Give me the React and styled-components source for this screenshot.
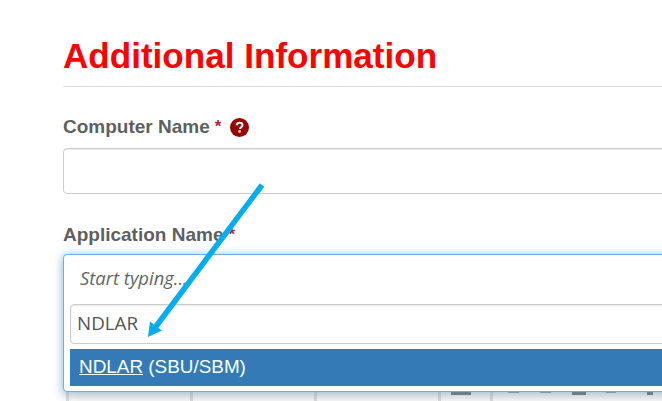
import React from 'react';
import styled, { createGlobalStyle } from 'styled-components';

const Global = createGlobalStyle`
  html, body {
    margin: 0;
    padding: 0;
    background: #fff;
    overflow: hidden;
  }
`;

const Page = styled.div`
  position: relative;
  width: 662px;
  height: 401px;
  overflow: hidden;
  box-sizing: border-box;
  padding: 36px 0 0 63px;
  font-family: "Liberation Sans", Arial, sans-serif;
`;

const Title = styled.h1`
  margin: 0;
  width: 700px;
  height: 51px;
  box-sizing: border-box;
  border-bottom: 1px solid #ddd;
  color: #ff0000;
  font-size: 35.1px;
  line-height: 40px;
  font-weight: 700;
`;

const Label = styled.label`
  display: flex;
  align-items: center;
  height: 20px;
  color: #5f5f5f;
  font-size: 19px;
  font-weight: 700;
  margin-top: ${(p) => p.$top}px;
`;

const Star = styled.span`
  color: #b0293a;
  margin-left: 5px;
  font-size: 17px;
`;

const Help = styled.svg`
  width: 19px;
  height: 19px;
  margin-left: 9px;
`;

const TextBox = styled.div`
  width: 700px;
  height: 46px;
  margin-top: 11px;
  box-sizing: border-box;
  border: 1px solid #ccc;
  border-radius: 4px;
  box-shadow: inset 0 1px 1px rgba(0, 0, 0, 0.075);
`;

const SelectBox = styled.div`
  position: relative;
  z-index: 1;
  width: 700px;
  height: 138px;
  margin-top: 9px;
  box-sizing: border-box;
  padding: 0 6px;
  background: #fff;
  border: 1px solid #66afe9;
  border-radius: 4px;
  box-shadow: 0 0 8px rgba(102, 175, 233, 0.6), 0 6px 12px rgba(0, 0, 0, 0.175);
`;

const Placeholder = styled.div`
  height: 49px;
  padding-left: 10px;
  color: #666;
  font-family: "Open Sans", sans-serif;
  font-size: 18.4px;
  font-style: italic;
  line-height: 45px;
`;

const Search = styled.div`
  height: 40px;
  box-sizing: border-box;
  padding-left: 6px;
  border: 1px solid #ccc;
  border-radius: 4px;
  box-shadow: inset 0 1px 2px rgba(0, 0, 0, 0.1);
  color: #555;
  font-family: "Open Sans", sans-serif;
  font-size: 18.8px;
  line-height: 37px;
`;

const Option = styled.div`
  height: 37px;
  margin-top: 5px;
  padding-left: 9px;
  background: #337ab7;
  color: #fff;
  font-size: 18.9px;
  line-height: 36px;
`;

const Match = styled.span`
  text-decoration: underline;
`;

const Toolbar = styled.div`
  display: flex;
  align-items: flex-start;
  width: 700px;
  height: 9px;
`;

const ToolButton = styled.div`
  flex: none;
  width: ${(p) => p.$width}px;
  height: 9px;
  box-sizing: border-box;
  border-right: 3px solid #e2e2e2;
`;

const ToolIcon = styled.span`
  flex: none;
  width: ${(p) => p.$width}px;
  height: ${(p) => (p.$faint ? 1 : 3)}px;
  margin-left: ${(p) => p.$gap}px;
  background: ${(p) => (p.$faint ? '#aaa' : '#808080')};
`;

const Arrow = styled.svg`
  position: absolute;
  z-index: 2;
  left: 0;
  top: 0;
  pointer-events: none;
`;

export default function App() {
  return (
    <>
      <Global />
      <Page>
        <Title>Additional Information</Title>
        <Label $top={30}>
          Computer Name<Star>*</Star>
          <Help viewBox="0 0 19 19">
            <circle cx="9.5" cy="9.5" r="9.5" fill="#990000" />
            <path d="M6.6 7.3c.2-1.6 1.4-2.6 3-2.6s2.9 1 2.9 2.4c0 1.1-.6 1.7-1.4 2.2-.7.5-1 .8-1 1.6" fill="none" stroke="#fff" strokeWidth="2" />
            <rect x="8.4" y="12.2" width="2.3" height="2.3" fill="#fff" />
          </Help>
        </Label>
        <TextBox />
        <Label $top={31}>
          Application Name<Star>*</Star>
        </Label>
        <SelectBox>
          <Placeholder>Start typing...</Placeholder>
          <Search>NDLAR</Search>
          <Option>
            <Match>NDLAR</Match> (SBU/SBM)
          </Option>
        </SelectBox>
        <Toolbar>
          <ToolButton $width={6} />
          <ToolButton $width={124} />
          <ToolButton $width={124} />
          <ToolButton $width={124} />
          <ToolIcon $width={20} $gap={10} />
          <ToolButton $width={22} />
          <ToolIcon $width={11} $gap={15} $faint />
          <ToolIcon $width={11} $gap={21} $faint />
          <ToolIcon $width={14} $gap={21} />
          <ToolIcon $width={10} $gap={20} $faint />
          <ToolIcon $width={6} $gap={31} />
        </Toolbar>
        <Arrow width="662" height="401" viewBox="0 0 662 401">
          <line x1="262" y1="185" x2="155.5" y2="327" stroke="#00aeef" strokeWidth="5.5" />
          <polygon points="148,337 150,321.5 162,330.5" fill="#00aeef" />
        </Arrow>
      </Page>
    </>
  );
}
